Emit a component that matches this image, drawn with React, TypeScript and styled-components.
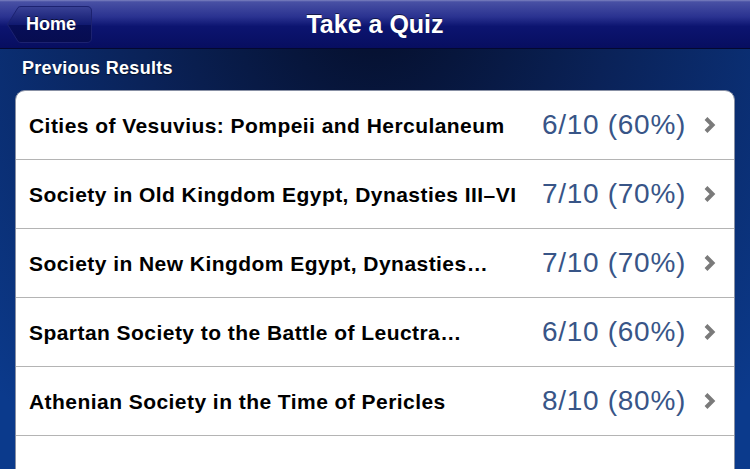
import React from 'react';
import styled, { createGlobalStyle } from 'styled-components';

interface QuizResult {
    title: string;
    score: string;
}

const results: QuizResult[] = [
    { title: 'Cities of Vesuvius: Pompeii and Herculaneum', score: '6/10 (60%)' },
    { title: 'Society in Old Kingdom Egypt, Dynasties III\u2013VI', score: '7/10 (70%)' },
    { title: 'Society in New Kingdom Egypt, Dynasties\u2026', score: '7/10 (70%)' },
    { title: 'Spartan Society to the Battle of Leuctra\u2026', score: '6/10 (60%)' },
    { title: 'Athenian Society in the Time of Pericles', score: '8/10 (80%)' },
    { title: '', score: '' },
];

const GlobalStyle = createGlobalStyle`
  html, body {
    margin: 0;
    padding: 0;
    overflow: hidden;
  }
  body {
    font-family: "Liberation Sans", Arial, sans-serif;
  }
`;

const Screen = styled.div`
  width: 750px;
  height: 469px;
  overflow: hidden;
  display: flex;
  flex-direction: column;
  background: radial-gradient(ellipse 70% 120% at 50% 0%, #050e2a 0%, #0a2258 45%, #0b3a8c 100%);
`;

const NavBar = styled.div`
  height: 48px;
  flex-shrink: 0;
  display: flex;
  align-items: center;
  justify-content: center;
  position: relative;
  background: linear-gradient(to bottom, #7c82c0 0%, #4850a4 4%, #2a3290 35%, #0c1470 55%, #070e60 100%);
  border-bottom: 1px solid #040830;
`;

const NavTitle = styled.div`
  color: #fff;
  font-weight: bold;
  font-size: 25px;
  text-shadow: 0 -1px 0 rgba(0, 0, 0, 0.5);
`;

const BackButton = styled.div`
  position: absolute;
  left: 7px;
  top: 6px;
  width: 85px;
  height: 37px;
  display: flex;
  align-items: center;
  padding-left: 19px;
  box-sizing: border-box;
  color: #fff;
  font-weight: bold;
  font-size: 18px;
  text-shadow: 0 -1px 0 rgba(0, 0, 0, 0.6);

  svg {
    position: absolute;
    left: 0;
    top: 0;
  }

  span {
    position: relative;
  }
`;

const SectionHeader = styled.div`
  color: #fff;
  font-weight: bold;
  font-size: 18px;
  letter-spacing: 0.3px;
  padding: 9px 0 0 22px;
  height: 33px;
  box-sizing: border-box;
  text-shadow: 0 1px 1px rgba(0, 0, 0, 0.6);
`;

const Table = styled.div`
  margin: 11px 15px 0 15px;
  background: #fff;
  border: 1px solid #8890a4;
  border-radius: 10px;
  overflow: hidden;
  flex-shrink: 0;
`;

const Row = styled.div<{ $last?: boolean }>`
  height: 68px;
  display: flex;
  align-items: center;
  padding: 0 17px 0 13px;
  border-bottom: ${p => (p.$last ? 'none' : '1px solid #b4b4b4')};
`;

const RowTitle = styled.div`
  flex: 1;
  font-weight: bold;
  font-size: 21px;
  letter-spacing: 0.45px;
  color: #000;
  white-space: nowrap;
  margin-top: 1px;
`;

const Score = styled.div`
  font-size: 28px;
  color: #385587;
  letter-spacing: 0.7px;
  margin-right: 17px;
`;

const Chevron = () => (
    <svg width="14" height="18" viewBox="0 0 14 18">
        <path d="M3 2.5 L9.5 9 L3 15.5" fill="none" stroke="#7a7a7a" strokeWidth="4" strokeLinecap="butt" strokeLinejoin="miter" />
    </svg>
);

const App: React.FC = () => {
    return (
        <Screen>
            <GlobalStyle />
            <NavBar>
                <BackButton>
                    <svg width="85" height="37" viewBox="0 0 85 37">
                        <defs>
                            <linearGradient id="btn" x1="0" y1="0" x2="0" y2="1">
                                <stop offset="0" stopColor="#3a4296" />
                                <stop offset="0.5" stopColor="#111a70" />
                                <stop offset="0.52" stopColor="#070e58" />
                                <stop offset="1" stopColor="#060c50" />
                            </linearGradient>
                        </defs>
                        <path d="M0.5 18.5 L11 1.5 Q12 0.5 14 0.5 L80 0.5 Q84.5 0.5 84.5 5 L84.5 32 Q84.5 36.5 80 36.5 L14 36.5 Q12 36.5 11 35.5 Z" fill="url(#btn)" stroke="#1c2270" strokeWidth="1" />
                    </svg>
                    <span>Home</span>
                </BackButton>
                <NavTitle>Take a Quiz</NavTitle>
            </NavBar>
            <SectionHeader>Previous Results</SectionHeader>
            <Table>
                {results.map((r, i) => (
                    <Row key={i} $last={i === results.length - 1}>
                        <RowTitle>{r.title}</RowTitle>
                        {r.score && <Score>{r.score}</Score>}
                        {r.score && <Chevron />}
                    </Row>
                ))}
            </Table>
        </Screen>
    );
};

export default App;
